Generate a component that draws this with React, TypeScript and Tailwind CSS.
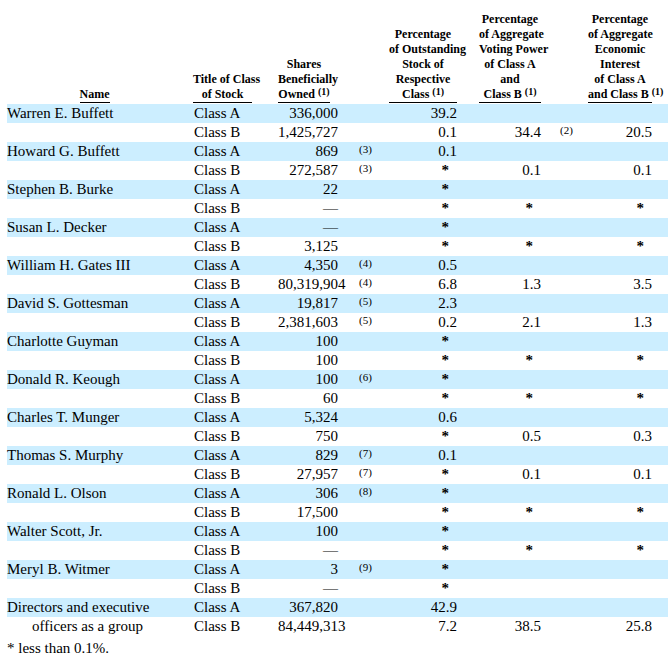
const COLS =
  "grid grid-cols-[175px_11px_59px_26px_60px_51px_68px_22px_62px_47px_64px_8px]"

type Holding = {
  name?: string
  cls: string
  shares: string
  fn1?: string
  outst: string
  voting?: string
  fn2?: string
  econ?: string
  indent?: boolean
}

const ROWS: Holding[] = [
  { name: "Warren E. Buffett", cls: "Class A", shares: "336,000", outst: "39.2" },
  { cls: "Class B", shares: "1,425,727", outst: "0.1", voting: "34.4", fn2: "(2)", econ: "20.5" },
  { name: "Howard G. Buffett", cls: "Class A", shares: "869", fn1: "(3)", outst: "0.1" },
  { cls: "Class B", shares: "272,587", fn1: "(3)", outst: "*", voting: "0.1", econ: "0.1" },
  { name: "Stephen B. Burke", cls: "Class A", shares: "22", outst: "*" },
  { cls: "Class B", shares: "—", outst: "*", voting: "*", econ: "*" },
  { name: "Susan L. Decker", cls: "Class A", shares: "—", outst: "*" },
  { cls: "Class B", shares: "3,125", outst: "*", voting: "*", econ: "*" },
  { name: "William H. Gates III", cls: "Class A", shares: "4,350", fn1: "(4)", outst: "0.5" },
  { cls: "Class B", shares: "80,319,904", fn1: "(4)", outst: "6.8", voting: "1.3", econ: "3.5" },
  { name: "David S. Gottesman", cls: "Class A", shares: "19,817", fn1: "(5)", outst: "2.3" },
  { cls: "Class B", shares: "2,381,603", fn1: "(5)", outst: "0.2", voting: "2.1", econ: "1.3" },
  { name: "Charlotte Guyman", cls: "Class A", shares: "100", outst: "*" },
  { cls: "Class B", shares: "100", outst: "*", voting: "*", econ: "*" },
  { name: "Donald R. Keough", cls: "Class A", shares: "100", fn1: "(6)", outst: "*" },
  { cls: "Class B", shares: "60", outst: "*", voting: "*", econ: "*" },
  { name: "Charles T. Munger", cls: "Class A", shares: "5,324", outst: "0.6" },
  { cls: "Class B", shares: "750", outst: "*", voting: "0.5", econ: "0.3" },
  { name: "Thomas S. Murphy", cls: "Class A", shares: "829", fn1: "(7)", outst: "0.1" },
  { cls: "Class B", shares: "27,957", fn1: "(7)", outst: "*", voting: "0.1", econ: "0.1" },
  { name: "Ronald L. Olson", cls: "Class A", shares: "306", fn1: "(8)", outst: "*" },
  { cls: "Class B", shares: "17,500", outst: "*", voting: "*", econ: "*" },
  { name: "Walter Scott, Jr.", cls: "Class A", shares: "100", outst: "*" },
  { cls: "Class B", shares: "—", outst: "*", voting: "*", econ: "*" },
  { name: "Meryl B. Witmer", cls: "Class A", shares: "3", fn1: "(9)", outst: "*" },
  { cls: "Class B", shares: "—", outst: "*" },
  { name: "Directors and executive", cls: "Class A", shares: "367,820", outst: "42.9" },
  {
    name: "officers as a group",
    indent: true,
    cls: "Class B",
    shares: "84,449,313",
    outst: "7.2",
    voting: "38.5",
    econ: "25.8",
  },
]

const Sup = () => <span className="align-[3px] text-[10px] leading-none">(1)</span>

const Pct = ({ value }: { value?: string }) =>
  value === "*" ? (
    <div className="pr-[8px] text-right font-bold">*</div>
  ) : (
    <div className="text-right">{value}</div>
  )

const Note = ({ value, pad }: { value?: string; pad: string }) => (
  <div className={`${pad} text-[11px] leading-[15px]`}>{value}</div>
)

const HeaderCell = ({ lines, width }: { lines: React.ReactNode[]; width: string }) => (
  <div className={`${width} self-end border-b border-black text-center whitespace-nowrap`}>
    {lines.map((line, i) => (
      <div key={i}>{line}</div>
    ))}
  </div>
)

export default function App() {
  return (
    <div
      className="min-h-[661px] bg-white pt-[12px] pl-[7px] text-[15px] text-black"
      style={{ fontFamily: '"Liberation Serif", "Times New Roman", serif' }}
    >
      <div className={`${COLS} mb-px text-[12px] leading-[15px] font-bold`}>
        <div className="flex justify-center self-end">
          <span className="border-b border-black">Name</span>
        </div>
        <div />
        <HeaderCell width="w-[59px]" lines={["Title of Class", "of Stock"]} />
        <div />
        <HeaderCell
          width="w-[52px]"
          lines={[
            "Shares",
            "Beneficially",
            <>
              Owned <Sup />
            </>,
          ]}
        />
        <div />
        <HeaderCell
          width="w-[68px]"
          lines={[
            "Percentage",
            "of Outstanding",
            "Stock of",
            "Respective",
            <>
              Class <Sup />
            </>,
          ]}
        />
        <div />
        <HeaderCell
          width="w-[62px]"
          lines={[
            "Percentage",
            "of Aggregate",
            "Voting Power",
            "of Class A",
            "and",
            <>
              Class B <Sup />
            </>,
          ]}
        />
        <div />
        <HeaderCell
          width="w-[64px]"
          lines={[
            "Percentage",
            "of Aggregate",
            "Economic",
            "Interest",
            "of Class A",
            <>
              and Class B <Sup />
            </>,
          ]}
        />
        <div />
      </div>

      {ROWS.map((row, i) => (
        <div
          key={i}
          className={`${COLS} h-[19px] leading-[19px] ${i % 2 === 0 ? "bg-[#cceeff]" : ""}`}
        >
          <div className={row.indent ? "pl-[25px] whitespace-nowrap" : "whitespace-nowrap"}>
            {row.name}
          </div>
          <div />
          <div className="pl-px">{row.cls}</div>
          <div />
          <div className="text-right whitespace-nowrap">{row.shares}</div>
          <Note value={row.fn1} pad="pl-[21px]" />
          <Pct value={row.outst} />
          <div />
          <Pct value={row.voting} />
          <Note value={row.fn2} pad="pl-[19px]" />
          <Pct value={row.econ} />
          <div />
        </div>
      ))}

      <p className="mt-[4px] leading-[17px]">* less than 0.1%.</p>
    </div>
  )
}
